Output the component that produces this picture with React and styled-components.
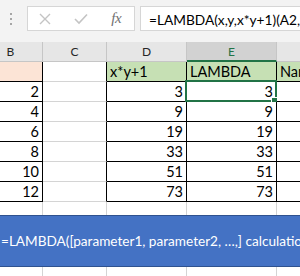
import React from 'react';
import styled, { createGlobalStyle } from 'styled-components';

const GlobalStyle = createGlobalStyle`
  html, body { margin: 0; padding: 0; background: #fff; }
  body { width: 300px; height: 276px; overflow: hidden; font-family: Lato, "Liberation Sans", sans-serif; }
  * { box-sizing: border-box; }
`;

const Screen = styled.div`
  position: relative;
  width: 300px;
  height: 276px;
  overflow: hidden;
  background: #fff;
`;

const Toolbar = styled.div`
  height: 42px;
  background: #f3f3f3;
  display: flex;
  align-items: flex-start;
  padding-top: 6px;
`;

const Grip = styled.div`
  width: 27px;
  height: 25px;
  display: flex;
  align-items: center;
  padding-left: 9px;
`;

const ButtonBox = styled.div`
  width: 108px;
  height: 25px;
  background: #fff;
  border: 1px solid #d6d6d6;
  display: flex;
  align-items: center;
`;

const IconSlot = styled.div`
  width: ${p => p.$w}px;
  height: 100%;
  display: flex;
  align-items: center;
  justify-content: center;
`;

const Fx = styled.span`
  font-family: "Liberation Serif", serif;
  font-style: italic;
  font-size: 15px;
  color: #707070;
  letter-spacing: -0.5px;
`;

const FormulaInput = styled.div`
  flex: 1;
  margin-left: 5px;
  height: 25px;
  background: #fff;
  border: 1px solid #d6d6d6;
  border-right: none;
  padding: 1px 0 0 8px;
  font-size: 13.7px;
  line-height: 23px;
  color: #000;
  white-space: nowrap;
  overflow: hidden;
`;

const Sheet = styled.div`
  margin-left: -21px;
  display: grid;
  grid-template-columns: 64px 64px 80px 90px 64px;
`;

const HeaderCell = styled.div`
  height: 20px;
  background: ${p => (p.$selected ? '#d2d2d2' : '#e6e6e6')};
  border-right: 1px solid #c6c6c6;
  border-bottom: ${p => (p.$selected ? '2px solid #217346' : '1px solid #c6c6c6')};
  color: ${p => (p.$selected ? '#217346' : '#262626')};
  font-size: 12px;
  line-height: 19px;
  text-align: center;
`;

const Cell = styled.div`
  position: relative;
  height: 20px;
  background: ${p => p.$bg || '#fff'};
  border-right: 1px solid ${p => p.$right || '#d4d4d4'};
  border-bottom: 1px solid ${p => p.$bottom || '#d4d4d4'};
  padding: 0 3px;
  font-size: 14.5px;
  line-height: 19px;
  color: #000;
  text-align: ${p => p.$align || 'left'};
  white-space: nowrap;
  overflow: visible;
`;

const Selection = styled.div`
  position: absolute;
  top: -2px;
  left: -2px;
  right: -1px;
  bottom: -1px;
  border: 2px solid #217346;
  pointer-events: none;
`;

const FillHandle = styled.div`
  position: absolute;
  right: -2px;
  bottom: -3px;
  width: 6px;
  height: 6px;
  background: #217346;
  border-left: 1px solid #fff;
  border-top: 1px solid #fff;
`;

const Banner = styled.div`
  position: absolute;
  top: 215px;
  left: -1px;
  width: 340px;
  height: 52px;
  background: #4472c4;
  border: 1px solid #2f528f;
  display: flex;
  align-items: center;
  padding-left: 1px;
  color: #fff;
  font-size: 13.6px;
  white-space: nowrap;
`;

const GripIcon = () => (
  <svg width="4" height="14" viewBox="0 0 4 14">
    <rect x="1" y="1" width="2" height="2" fill="#a6a6a6" />
    <rect x="1" y="6" width="2" height="2" fill="#a6a6a6" />
    <rect x="1" y="11" width="2" height="2" fill="#a6a6a6" />
  </svg>
);

const CrossIcon = () => (
  <svg width="12" height="12" viewBox="0 0 12 12">
    <path d="M1 1 L11 11 M11 1 L1 11" stroke="#c4c4c4" strokeWidth="1.4" fill="none" />
  </svg>
);

const CheckIcon = () => (
  <svg width="14" height="12" viewBox="0 0 14 12">
    <path d="M1 6 L5 10 L13 1.5" stroke="#c4c4c4" strokeWidth="1.6" fill="none" />
  </svg>
);

const B = '#000';

const columns = ['B', 'C', 'D', 'E', 'F'];

const rows = [
  ['', '', 'x*y+1', 'LAMBDA', 'Name'],
  ['2', '', '3', '3', ''],
  ['4', '', '9', '9', ''],
  ['6', '', '19', '19', ''],
  ['8', '', '33', '33', ''],
  ['10', '', '51', '51', ''],
  ['12', '', '73', '73', ''],
];

const GREEN = '#c6e0b4';
const SALMON = '#fce4d6';

export default function App() {
  return (
    <Screen>
      <GlobalStyle />
      <Toolbar>
        <Grip><GripIcon /></Grip>
        <ButtonBox>
          <IconSlot $w={35}><CrossIcon /></IconSlot>
          <IconSlot $w={36}><CheckIcon /></IconSlot>
          <IconSlot $w={36}><Fx>fx</Fx></IconSlot>
        </ButtonBox>
        <FormulaInput>=LAMBDA(x,y,x*y+1)(A2,B2)</FormulaInput>
      </Toolbar>
      <Sheet>
        {columns.map(c => (
          <HeaderCell key={c} $selected={c === 'E'}>{c}</HeaderCell>
        ))}
        {rows.map((r, ri) => (
          <React.Fragment key={ri}>
            <Cell $bg={ri === 0 ? SALMON : '#fff'} $right={B} $bottom={B} $align="right">{r[0]}</Cell>
            <Cell $right={B}>{r[1]}</Cell>
            <Cell $bg={ri === 0 ? GREEN : '#fff'} $right={B} $bottom={B} $align={ri === 0 ? 'left' : 'right'}>{r[2]}</Cell>
            <Cell $bg={ri === 0 ? GREEN : '#fff'} $right={B} $bottom={B} $align={ri === 0 ? 'left' : 'right'}>
              {r[3]}
              {ri === 1 && (
                <Selection>
                  <FillHandle />
                </Selection>
              )}
            </Cell>
            <Cell $bg={ri === 0 ? GREEN : '#fff'} $right={B} $bottom={B}>{r[4]}</Cell>
          </React.Fragment>
        ))}
        {[0, 1, 2, 3].map(ri => (
          <React.Fragment key={'e' + ri}>
            {columns.map(c => <Cell key={c} />)}
          </React.Fragment>
        ))}
      </Sheet>
      <Banner>=LAMBDA([parameter1, parameter2, …,] calculation)</Banner>
    </Screen>
  );
}
